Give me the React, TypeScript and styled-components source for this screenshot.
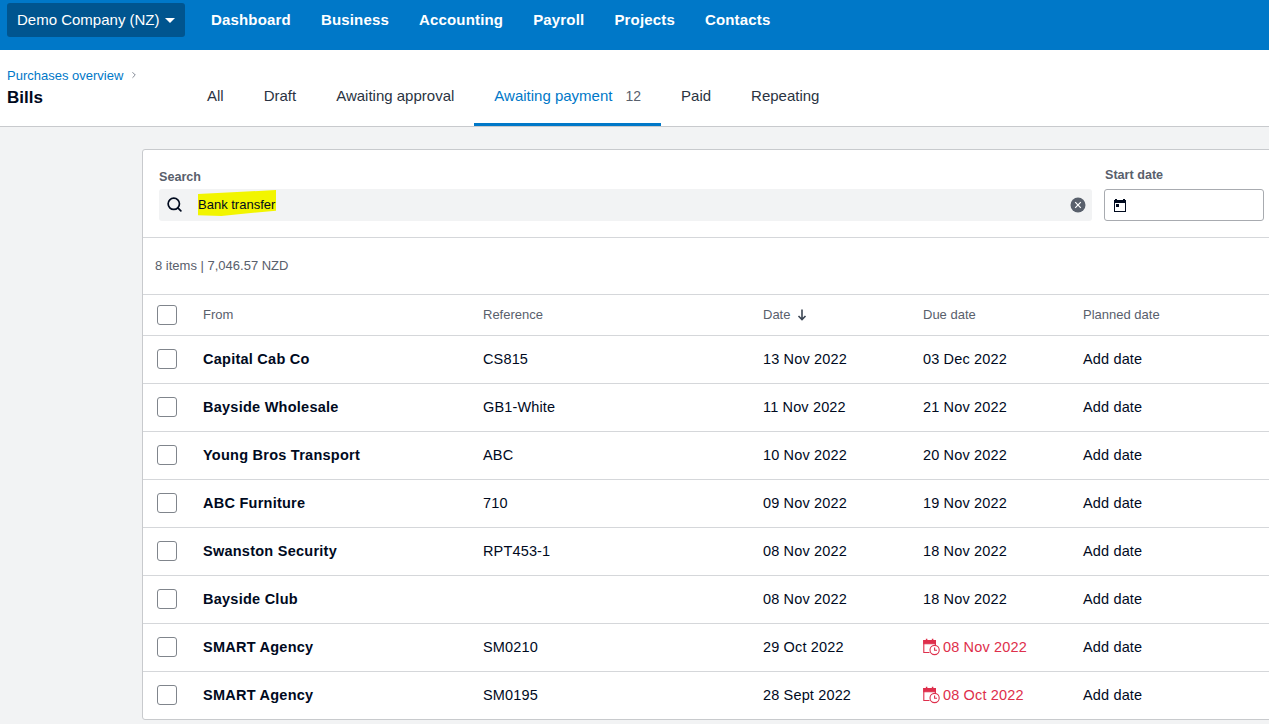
import { FiChevronRight, FiSearch } from "react-icons/fi"
import styled, { createGlobalStyle } from "styled-components"

const GlobalStyle = createGlobalStyle`
  html, body {
    margin: 0;
    height: 724px;
    overflow: hidden;
    background: #f2f3f4;
    font-family: "Liberation Sans", Arial, sans-serif;
    color: #000a1e;
  }
`

const TopBar = styled.header`
  display: flex;
  align-items: flex-start;
  height: 50px;
  padding: 3px 0 0 7px;
  box-sizing: border-box;
  background: #0078c8;
`

const OrgButton = styled.div`
  display: flex;
  align-items: center;
  gap: 5px;
  width: 178px;
  height: 34px;
  padding: 0 0 2px 10px;
  box-sizing: border-box;
  border-radius: 3px;
  background: #00558f;
  color: #fff;
  font-size: 15px;
`

const Caret = styled.span`
  width: 0;
  height: 0;
  margin-top: 2px;
  border-left: 5px solid transparent;
  border-right: 5px solid transparent;
  border-top: 5px solid #fff;
`

const NavList = styled.nav`
  display: flex;
  gap: 30px;
  height: 32px;
  margin-left: 26px;
  align-items: center;
`

const NavLink = styled.span`
  color: #fff;
  font-size: 15px;
  font-weight: bold;
  letter-spacing: 0.17px;
`

const SubHeader = styled.div`
  display: flex;
  height: 77px;
  box-sizing: border-box;
  background: #fff;
  border-bottom: 1px solid #c8cacd;
`

const TitleBlock = styled.div`
  width: 187px;
  padding: 17px 0 0 7px;
  box-sizing: border-box;
`

const Crumb = styled.div`
  display: flex;
  align-items: center;
  gap: 6px;
  height: 16px;
  color: #0078c8;
  font-size: 13px;
  svg {
    color: #6b7280;
  }
`

const PageTitle = styled.div`
  margin-top: 5px;
  font-size: 17px;
  font-weight: bold;
`

const Tabs = styled.div`
  display: flex;
  align-items: stretch;
`

const Tab = styled.div<{ $active?: boolean }>`
  display: flex;
  align-items: center;
  gap: 13px;
  height: 76px;
  padding: 18px 20px 0;
  box-sizing: border-box;
  font-size: 15px;
  color: ${(p) => (p.$active ? "#0078c8" : "#2a3342")};
  border-bottom: 3px solid ${(p) => (p.$active ? "#0078c8" : "transparent")};
`

const TabCount = styled.span`
  color: #59606c;
  font-size: 14px;
`

const Body = styled.main`
  padding: 22px 0 0 142px;
`

const Card = styled.section`
  width: 1140px;
  box-sizing: border-box;
  background: #fff;
  border: 1px solid #c8cacd;
  border-radius: 3px;
`

const Filters = styled.div`
  display: flex;
  height: 88px;
  padding: 17px 0 0 16px;
  box-sizing: border-box;
  border-bottom: 1px solid #d5d7da;
`

const SearchField = styled.div`
  width: 933px;
`

const DateField = styled.div`
  width: 160px;
  margin-left: 12px;
`

const FieldLabel = styled.div<{ $raised?: boolean }>`
  height: 22px;
  font-size: 12.6px;
  font-weight: bold;
  color: #59606c;
  line-height: ${(p) => (p.$raised ? "17px" : "20px")};
  padding-left: ${(p) => (p.$raised ? "1px" : "0")};
`

const SearchBox = styled.div`
  display: flex;
  align-items: center;
  height: 32px;
  padding: 0 6px 0 7px;
  box-sizing: border-box;
  border-radius: 3px;
  background: #f2f3f4;
  font-size: 13px;
  line-height: 30px;
  svg.search {
    stroke-width: 2.4;
    margin-top: -1px;
  }
`

const Highlight = styled.span`
  position: relative;
  margin-left: 15px;
  flex: 1;
  &::before {
    content: "";
    position: absolute;
    left: 0;
    top: 0;
    width: 78px;
    height: 26px;
    background: #f2f500;
    clip-path: polygon(0 15%, 50% 8%, 100% 0, 100% 80%, 55% 92%, 30% 100%, 0 97%);
  }
`

const HighlightText = styled.span`
  position: relative;
`

const DateInput = styled.div`
  display: flex;
  align-items: center;
  height: 32px;
  padding-left: 8px;
  box-sizing: border-box;
  background: #fff;
  border: 1px solid #a8abb0;
  border-radius: 3px;
`

const Summary = styled.div`
  display: flex;
  align-items: center;
  height: 57px;
  padding: 0 0 2px 12px;
  box-sizing: border-box;
  font-size: 13px;
  color: #59606c;
  border-bottom: 1px solid #d5d7da;
`

const Row = styled.div<{ $head?: boolean }>`
  display: grid;
  grid-template-columns: 60px 280px 280px 160px 160px 1fr;
  align-items: center;
  height: ${(p) => (p.$head ? "41px" : "48px")};
  padding-bottom: 1px;
  box-sizing: border-box;
  font-size: ${(p) => (p.$head ? "13px" : "14.5px")};
  letter-spacing: ${(p) => (p.$head ? "0" : "0.15px")};
  color: ${(p) => (p.$head ? "#59606c" : "#000a1e")};
  border-bottom: 1px solid #d5d7da;
  &:last-child {
    height: 47px;
    border-bottom: none;
  }
`

const CheckCell = styled.div`
  display: flex;
  padding-left: 14px;
`

const CheckBox = styled.span`
  width: 20px;
  height: 20px;
  box-sizing: border-box;
  border: 1px solid #80858c;
  border-radius: 3px;
  background: #fff;
`

const Supplier = styled.div`
  font-weight: bold;
  letter-spacing: 0.25px;
`

const DateHead = styled.div`
  display: flex;
  align-items: center;
  gap: 7px;
`

const Overdue = styled.div`
  display: flex;
  align-items: center;
  gap: 2px;
  color: #de2f4c;
`

const CalendarIcon = () => (
  <svg width="14" height="14" viewBox="0 0 14 14" fill="#000a1e">
    <path d="M2 1h2v1h6V1h2v1h1v12H1V2h1V1zm0 4v8h10V5H2z" fillRule="evenodd" />
    <rect x="3" y="6" width="3" height="3" />
  </svg>
)

const ClearIcon = () => (
  <svg width="16" height="16" viewBox="0 0 16 16">
    <circle cx="8" cy="8" r="7.5" fill="#59606c" />
    <path d="M5.2 5.2l5.6 5.6M10.8 5.2l-5.6 5.6" stroke="#fff" strokeWidth="1.2" />
  </svg>
)

const SortArrow = () => (
  <svg width="10" height="12" viewBox="0 0 10 12" fill="none" stroke="#3c4654" strokeWidth="1.6">
    <path d="M5 0.5v10M1.5 7L5 10.5 8.5 7" />
  </svg>
)

const OverdueIcon = () => (
  <svg width="18" height="18" viewBox="0 0 18 18" fill="none" stroke="#de2f4c" strokeWidth="1.1">
    <path d="M6.5 14.5H0.8V2.5h11.6v5" />
    <path d="M0.8 2.5h11.6v3.2H0.8z" fill="#de2f4c" />
    <path d="M3.6 0.8v2M9.6 0.8v2" strokeWidth="1.5" />
    <circle cx="11.6" cy="12" r="4.6" fill="#fff" />
    <path d="M11.6 9.5v2.8h2.4" />
  </svg>
)

interface Bill {
  from: string
  reference: string
  date: string
  due: string
  overdue?: boolean
}

const bills: Bill[] = [
  { from: "Capital Cab Co", reference: "CS815", date: "13 Nov 2022", due: "03 Dec 2022" },
  { from: "Bayside Wholesale", reference: "GB1-White", date: "11 Nov 2022", due: "21 Nov 2022" },
  { from: "Young Bros Transport", reference: "ABC", date: "10 Nov 2022", due: "20 Nov 2022" },
  { from: "ABC Furniture", reference: "710", date: "09 Nov 2022", due: "19 Nov 2022" },
  { from: "Swanston Security", reference: "RPT453-1", date: "08 Nov 2022", due: "18 Nov 2022" },
  { from: "Bayside Club", reference: "", date: "08 Nov 2022", due: "18 Nov 2022" },
  { from: "SMART Agency", reference: "SM0210", date: "29 Oct 2022", due: "08 Nov 2022", overdue: true },
  { from: "SMART Agency", reference: "SM0195", date: "28 Sept 2022", due: "08 Oct 2022", overdue: true },
]

const navItems = ["Dashboard", "Business", "Accounting", "Payroll", "Projects", "Contacts"]

const App = () => {
  return (
    <>
      <GlobalStyle />
      <TopBar>
        <OrgButton>
          Demo Company (NZ) <Caret />
        </OrgButton>
        <NavList>
          {navItems.map((item) => (
            <NavLink key={item}>{item}</NavLink>
          ))}
        </NavList>
      </TopBar>
      <SubHeader>
        <TitleBlock>
          <Crumb>
            Purchases overview <FiChevronRight size={10} />
          </Crumb>
          <PageTitle>Bills</PageTitle>
        </TitleBlock>
        <Tabs>
          <Tab>All</Tab>
          <Tab>Draft</Tab>
          <Tab>Awaiting approval</Tab>
          <Tab $active>
            Awaiting payment <TabCount>12</TabCount>
          </Tab>
          <Tab>Paid</Tab>
          <Tab>Repeating</Tab>
        </Tabs>
      </SubHeader>
      <Body>
        <Card>
          <Filters>
            <SearchField>
              <FieldLabel>Search</FieldLabel>
              <SearchBox>
                <FiSearch className="search" size={17} />
                <Highlight>
                  <HighlightText>Bank transfer</HighlightText>
                </Highlight>
                <ClearIcon />
              </SearchBox>
            </SearchField>
            <DateField>
              <FieldLabel $raised>Start date</FieldLabel>
              <DateInput>
                <CalendarIcon />
              </DateInput>
            </DateField>
          </Filters>
          <Summary>8 items | 7,046.57 NZD</Summary>
          <Row $head>
            <CheckCell>
              <CheckBox />
            </CheckCell>
            <div>From</div>
            <div>Reference</div>
            <DateHead>
              Date <SortArrow />
            </DateHead>
            <div>Due date</div>
            <div>Planned date</div>
          </Row>
          {bills.map((bill, i) => (
            <Row key={i}>
              <CheckCell>
                <CheckBox />
              </CheckCell>
              <Supplier>{bill.from}</Supplier>
              <div>{bill.reference}</div>
              <div>{bill.date}</div>
              {bill.overdue ? (
                <Overdue>
                  <OverdueIcon />
                  {bill.due}
                </Overdue>
              ) : (
                <div>{bill.due}</div>
              )}
              <div>Add date</div>
            </Row>
          ))}
        </Card>
      </Body>
    </>
  )
}

export default App
